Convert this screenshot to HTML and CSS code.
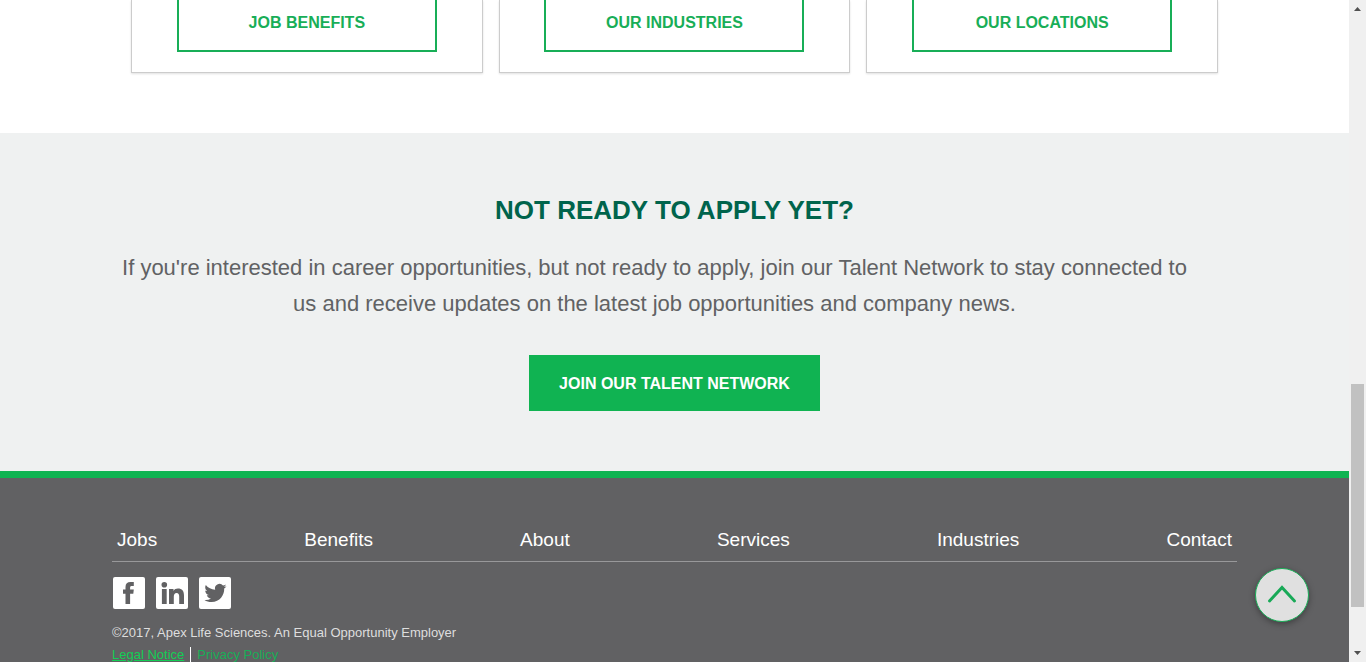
FILE: index.html
```html
<!DOCTYPE html>
<html lang="en">
<head>
<meta charset="utf-8">
<title>Apex Life Sciences Careers</title>
<link rel="stylesheet" href="styles.css">
</head>
<body>
<div class="page">
  <main>
    <section class="cards">
      <div class="card"><a class="outline-btn" href="#">JOB BENEFITS</a></div>
      <div class="card"><a class="outline-btn" href="#">OUR INDUSTRIES</a></div>
      <div class="card"><a class="outline-btn" href="#">OUR LOCATIONS</a></div>
    </section>
    <section class="talent">
      <h2>NOT READY TO APPLY YET?</h2>
      <p>If you're interested in career opportunities, but not ready to apply, join our Talent Network to stay connected to us and receive updates on the latest job opportunities and company news.</p>
      <a class="solid-btn" href="#">JOIN OUR TALENT NETWORK</a>
    </section>
  </main>
  <footer class="footer">
    <div class="footer-inner">
      <nav class="nav">
        <a href="#">Jobs</a>
        <a href="#">Benefits</a>
        <a href="#">About</a>
        <a href="#">Services</a>
        <a href="#">Industries</a>
        <a href="#">Contact</a>
      </nav>
      <div class="social">
        <a href="#" aria-label="Facebook"><svg viewBox="0 0 32 32"><path d="M12.500 27V16.800H10V12.600h2.500V10c0-3.400 1.800-5 5-5H20.800v4h-2c-1.300 0-1.700.5-1.700 1.600v2h3.700l-.5 4.200h-3.200V27z"/></svg></a>
        <a href="#" aria-label="LinkedIn"><svg viewBox="0 0 32 32"><circle cx="8.300" cy="7.700" r="2.800"/><path d="M5.900 12h4.800v15H5.900zM13 12h4.500v2c1-1.600 2.500-2.400 4.400-2.400 4.200 0 6.100 2.500 6.100 7V27h-4.800v-7.600c0-2.300-.8-3.500-2.600-3.500-1.900 0-2.800 1.400-2.800 3.800V27H13z"/></svg></a>
        <a href="#" aria-label="Twitter"><svg viewBox="0 0 32 32"><path d="M27.500 9.300c-.8.400-1.700.6-2.600.7.900-.6 1.600-1.400 2-2.500-.9.500-1.800.9-2.900 1.100a4.500 4.500 0 0 0-7.800 4.200c-3.800-.2-7.100-2-9.400-4.800-1.200 2.100-.6 4.800 1.400 6.100-.7 0-1.400-.2-2-.6 0 2.200 1.500 4.100 3.600 4.600-.7.200-1.400.2-2 .1.600 1.800 2.200 3.100 4.200 3.200A9 9 0 0 1 5.500 23c2 1.400 4.400 2.100 7 2.100 8.400 0 13-7.100 12.700-13.500.9-.6 1.700-1.400 2.300-2.300z"/></svg></a>
      </div>
      <p class="copyright">©2017, Apex Life Sciences. An Equal Opportunity Employer</p>
      <p class="legal"><a class="notice" href="#">Legal Notice</a><a class="privacy" href="#">Privacy Policy</a></p>
    </div>
  </footer>
</div>
<div class="scrollbar">
  <svg class="arrow" viewBox="0 0 17 17"><path d="M5 11h7L8.500 7z"/></svg>
  <div class="track"><div class="thumb"></div></div>
  <svg class="arrow" viewBox="0 0 17 17"><path d="M5 6h7l-3.500 4z"/></svg>
</div>
<button class="to-top" type="button" aria-label="Back to top"><svg viewBox="0 0 52 52"><path d="M13.500 32 26 18.500 38.500 32"/></svg></button>
</body>
</html>
```
FILE: styles.css
```css
* { box-sizing: border-box; }

body {
  margin: 0;
  height: 100vh;
  overflow: hidden;
  display: flex;
  background: #fff;
  font-family: "Liberation Sans", Arial, sans-serif;
}

a { text-decoration: none; }

.page {
  flex: 1;
  min-width: 0;
  display: flex;
  flex-direction: column;
  overflow: hidden;
}

main { flex: none; }

.cards {
  display: grid;
  grid-template-columns: repeat(3, 1fr);
  gap: 16px;
  max-width: 1087px;
  margin: 0 auto 60px;
}

.card {
  display: flex;
  justify-content: center;
  padding-bottom: 20px;
  border: 1px solid #ccc;
  border-top: 0;
  box-shadow: 0 1px 2px rgba(0, 0, 0, 0.12);
}

.outline-btn {
  width: 260px;
  padding: 13px 0 17px;
  border: 2px solid #18ae57;
  border-top: 0;
  color: #18ae57;
  font-size: 16px;
  line-height: 20px;
  font-weight: bold;
  text-align: center;
}

.talent {
  display: flex;
  flex-direction: column;
  align-items: center;
  padding: 60px 110px;
  background: #eff1f1;
  text-align: center;
}

.talent h2 {
  margin: 0;
  color: #00644c;
  font-size: 26px;
  line-height: 34px;
}

.talent p {
  margin: 23px 40px 33px 0;
  color: #616264;
  font-size: 22px;
  line-height: 36px;
}

.solid-btn {
  padding: 19px 30px 17px;
  background: #10b352;
  color: #fff;
  font-size: 16px;
  line-height: 20px;
  font-weight: bold;
}

.footer {
  flex: 1;
  border-top: 7px solid #10b352;
  background: #616163;
}

.footer-inner { margin: 0 112px; }

.nav {
  display: flex;
  justify-content: space-between;
  padding: 50px 5px 10px;
  border-bottom: 1px solid #98989a;
}

.nav a {
  color: #fff;
  font-size: 19px;
  line-height: 23px;
}

.social {
  display: flex;
  gap: 11px;
  padding: 15px 0 13px 1px;
}

.social a {
  width: 32px;
  height: 32px;
  border-radius: 2px;
  background: #fff;
}

.social svg {
  display: block;
  fill: #616163;
}

.copyright,
.legal {
  margin: 0;
  color: #dedede;
  font-size: 13px;
  line-height: 22px;
}

.legal {
  display: flex;
  align-items: center;
  min-height: 22px;
}

.legal a { line-height: 16px; }

.notice {
  padding-right: 6px;
  border-right: 1px solid #fff;
  color: #12cf55;
  text-decoration: underline;
}

.privacy {
  padding-left: 6px;
  color: #18ae57;
}

.scrollbar {
  flex: none;
  display: flex;
  flex-direction: column;
  width: 17px;
  background: #f0f0f0;
}

.arrow {
  width: 17px;
  height: 17px;
  fill: #505050;
}

.track {
  flex: 1;
  display: flex;
  flex-direction: column;
  justify-content: flex-end;
  padding: 0 2px 38px;
}

.thumb {
  height: 223px;
  background: #c1c1c1;
}

.to-top {
  position: fixed;
  right: 57px;
  bottom: 40px;
  width: 54px;
  height: 54px;
  padding: 0;
  border: 1px solid #18ae57;
  border-radius: 50%;
  background: #e0e0e0;
  box-shadow: 0 2px 6px rgba(0, 0, 0, 0.35);
}

.to-top svg {
  display: block;
  fill: none;
  stroke: #18a957;
  stroke-width: 3;
  stroke-linecap: round;
}
```
